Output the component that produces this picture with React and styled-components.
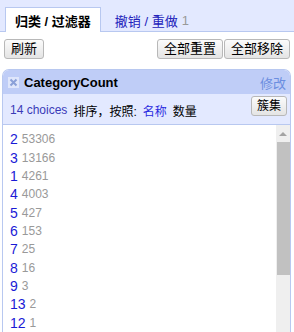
import React from "react";
import styled, { createGlobalStyle } from "styled-components";

const Global = createGlobalStyle`
  html, body { margin: 0; padding: 0; background: #fff; }
  body {
    font-family: "Liberation Sans", Arial, "Noto Sans CJK SC", sans-serif;
    font-size: 13px;
    color: #000;
    overflow: hidden;
  }
`;

const Page = styled.div`
  width: 294px;
  height: 332px;
  display: flex;
  flex-direction: column;
  overflow: hidden;
`;

const TabBar = styled.div`
  height: 32px;
  box-sizing: border-box;
  background: #e3e9ff;
  border-bottom: 1px solid #b8c8f0;
  display: flex;
  align-items: flex-end;
  padding-left: 5px;
`;

const Tab = styled.div`
  height: ${(p) => (p.$active ? "25px" : "24px")};
  box-sizing: border-box;
  margin-bottom: -1px;
  display: flex;
  align-items: center;
  padding: ${(p) => (p.$active ? "0 9px" : "0 13px")};
  background: ${(p) => (p.$active ? "#fff" : "transparent")};
  border: 1px solid ${(p) => (p.$active ? "#b8c8f0" : "transparent")};
  border-bottom: none;
  font-size: 13px;
  font-weight: ${(p) => (p.$active ? "bold" : "normal")};
  color: ${(p) => (p.$active ? "#000" : "#2222bb")};
  white-space: nowrap;
`;

const Muted = styled.span`
  color: #999;
  margin-left: 4px;
`;

const Toolbar = styled.div`
  display: flex;
  justify-content: space-between;
  align-items: center;
  padding: 7px 4px 0 4px;
  height: 20px;
`;

const ButtonGroup = styled.div`
  display: flex;
  gap: 1px;
`;

const Button = styled.button`
  height: 20px;
  box-sizing: border-box;
  padding: 0 6px;
  margin: 0;
  font-family: inherit;
  font-size: ${(p) => p.$size || 13}px;
  color: #000;
  background: linear-gradient(#fbfbfb, #e4e4e4);
  border: 1px solid #b8b8b8;
  border-radius: 3px;
  line-height: 18px;
  cursor: pointer;
`;

const Panel = styled.div`
  margin: 10px 3px 0 2px;
  flex: 1;
  display: flex;
  flex-direction: column;
  border: 1px solid #b8c8f0;
  border-bottom: none;
  border-radius: 7px 7px 0 0;
  overflow: hidden;
`;

const Header = styled.div`
  height: 24px;
  background: #bfcdf7;
  display: flex;
  align-items: center;
  padding: 0 4px 0 5px;
`;

const CloseIcon = styled.svg`
  width: 11px;
  height: 11px;
  margin-right: 5px;
  flex: none;
`;

const Title = styled.div`
  flex: 1;
  font-size: 13px;
  font-weight: bold;
  color: #000;
`;

const EditLink = styled.span`
  color: #6b8ee0;
  font-size: 13px;
`;

const SubHeader = styled.div`
  height: 31px;
  box-sizing: border-box;
  background: #e3e9ff;
  border-bottom: 1px solid #b8c8f0;
  display: flex;
  align-items: center;
  padding: 2px 3px 0 7px;
  font-size: 12px;
  white-space: nowrap;
`;

const Choices = styled.span`
  color: #3a3ab8;
  margin-right: 6px;
`;

const SortLabel = styled.span`
  color: #000;
`;

const SortLink = styled.span`
  color: ${(p) => (p.$selected ? "#000" : "#2a2ae0")};
  margin-left: 6px;
`;

const Spacer = styled.div`
  flex: 1;
`;

const ClusterButton = styled(Button)`
  align-self: flex-start;
  margin-top: 0;
  padding: 0 5px;
`;

const Body = styled.div`
  flex: 1;
  display: flex;
  min-height: 0;
`;

const List = styled.div`
  flex: 1;
  padding: 5px 0 0 7px;
  display: flex;
  flex-direction: column;
`;

const Row = styled.div`
  height: 19px;
  display: flex;
  align-items: center;
  white-space: nowrap;
`;

const Label = styled.span`
  color: #1a1ad6;
  font-size: 14px;
`;

const Count = styled.span`
  color: #999;
  font-size: 12px;
  margin-left: 4px;
`;

const Scrollbar = styled.div`
  width: 14px;
  background: #efefef;
  display: flex;
  flex-direction: column;
  align-items: center;
`;

const ArrowUp = styled.div`
  height: 17px;
  display: flex;
  align-items: center;
  justify-content: center;
  &::before {
    content: "";
    border-left: 4px solid transparent;
    border-right: 4px solid transparent;
    border-bottom: 4px solid #a3a3a3;
  }
`;

const Thumb = styled.div`
  width: 13px;
  height: 133px;
  background: #c1c1c1;
`;

const rows = [
  ["2", "53306"],
  ["3", "13166"],
  ["1", "4261"],
  ["4", "4003"],
  ["5", "427"],
  ["6", "153"],
  ["7", "25"],
  ["8", "16"],
  ["9", "3"],
  ["13", "2"],
  ["12", "1"],
];

export default function App() {
  return (
    <Page>
      <Global />
      <TabBar>
        <Tab $active>归类 / 过滤器</Tab>
        <Tab>
          撤销 / 重做<Muted>1</Muted>
        </Tab>
      </TabBar>
      <Toolbar>
        <Button>刷新</Button>
        <ButtonGroup>
          <Button>全部重置</Button>
          <Button>全部移除</Button>
        </ButtonGroup>
      </Toolbar>
      <Panel>
        <Header>
          <CloseIcon viewBox="0 0 11 11">
            <rect x="0" y="0" width="11" height="11" fill="#dfe6fb" />
            <path d="M2.5 2.5 L8.5 8.5 M8.5 2.5 L2.5 8.5" stroke="#8aa0d8" strokeWidth="2" />
          </CloseIcon>
          <Title>CategoryCount</Title>
          <EditLink>修改</EditLink>
        </Header>
        <SubHeader>
          <Choices>14 choices</Choices>
          <SortLabel>排序，按照:</SortLabel>
          <SortLink>名称</SortLink>
          <SortLink $selected>数量</SortLink>
          <Spacer />
          <ClusterButton $size={12}>簇集</ClusterButton>
        </SubHeader>
        <Body>
          <List>
            {rows.map(([l, c]) => (
              <Row key={l}>
                <Label>{l}</Label>
                <Count>{c}</Count>
              </Row>
            ))}
          </List>
          <Scrollbar>
            <ArrowUp />
            <Thumb />
          </Scrollbar>
        </Body>
      </Panel>
    </Page>
  );
}
